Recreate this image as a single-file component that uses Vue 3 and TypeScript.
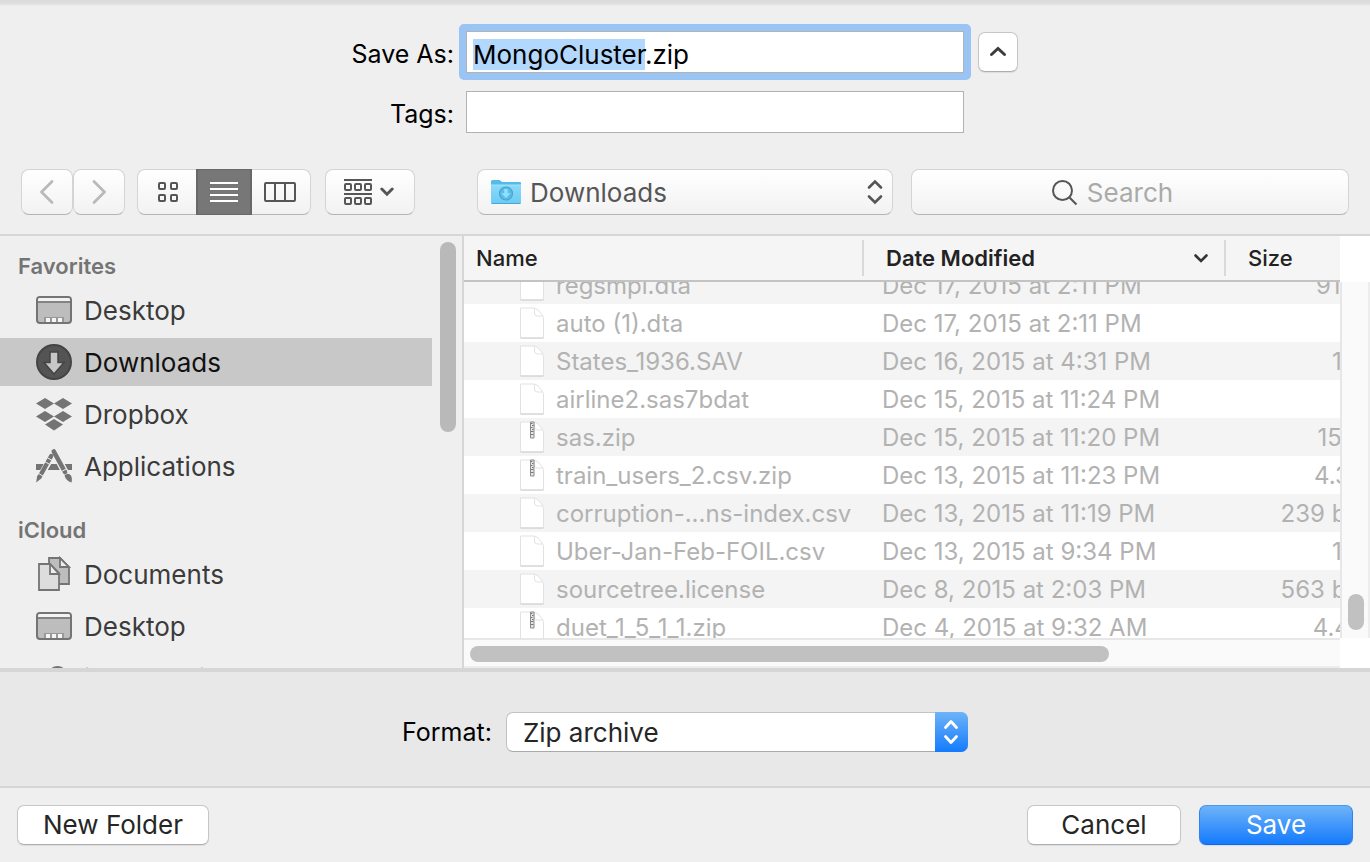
<script setup lang="ts">
import { nextTick, onMounted, ref } from 'vue'

type SidebarIcon = 'desktop' | 'downloads' | 'dropbox' | 'applications' | 'documents' | 'cloud'
type ViewMode = 'icons' | 'list' | 'columns'

interface Place {
  label: string
  icon: SidebarIcon
}

interface PlaceGroup {
  title: string
  places: Place[]
}

interface FileRow {
  name: string
  modified: string
  size: string
}

const groups: PlaceGroup[] = [
  {
    title: 'Favorites',
    places: [
      { label: 'Desktop', icon: 'desktop' },
      { label: 'Downloads', icon: 'downloads' },
      { label: 'Dropbox', icon: 'dropbox' },
      { label: 'Applications', icon: 'applications' },
    ],
  },
  {
    title: 'iCloud',
    places: [
      { label: 'Documents', icon: 'documents' },
      { label: 'Desktop', icon: 'desktop' },
      { label: 'iCloud Drive', icon: 'cloud' },
    ],
  },
]

const files: FileRow[] = [
  { name: 'regsmpl.dta', modified: 'Dec 17, 2015 at 2:11 PM', size: '916 KB' },
  { name: 'auto (1).dta', modified: 'Dec 17, 2015 at 2:11 PM', size: '1 KB' },
  { name: 'States_1936.SAV', modified: 'Dec 16, 2015 at 4:31 PM', size: '17 KB' },
  { name: 'airline2.sas7bdat', modified: 'Dec 15, 2015 at 11:24 PM', size: '1 KB' },
  { name: 'sas.zip', modified: 'Dec 15, 2015 at 11:20 PM', size: '157 KB' },
  { name: 'train_users_2.csv.zip', modified: 'Dec 13, 2015 at 11:23 PM', size: '4.3 MB' },
  { name: 'corruption-...ns-index.csv', modified: 'Dec 13, 2015 at 11:19 PM', size: '239 bytes' },
  { name: 'Uber-Jan-Feb-FOIL.csv', modified: 'Dec 13, 2015 at 9:34 PM', size: '17 KB' },
  { name: 'sourcetree.license', modified: 'Dec 8, 2015 at 2:03 PM', size: '563 bytes' },
  { name: 'duet_1_5_1_1.zip', modified: 'Dec 4, 2015 at 9:32 AM', size: '4.4 MB' },
]

const fileName = ref('MongoCluster.zip')
const tags = ref('')
const query = ref('')
const folder = ref('Downloads')
const format = ref('Zip archive')
const view = ref<ViewMode>('list')
const selected = ref('Downloads')
const nameInput = ref<HTMLInputElement | null>(null)
const fileList = ref<HTMLElement | null>(null)

onMounted(async () => {
  await nextTick()
  if (fileList.value) fileList.value.scrollTop = 16
  const input = nameInput.value
  if (input) {
    input.focus({ preventScroll: true })
    input.setSelectionRange(0, fileName.value.lastIndexOf('.'))
  }
})
</script>

<template>
  <form class="dialog" @submit.prevent>
    <div class="fields">
      <label for="save-as">Save As:</label>
      <input id="save-as" ref="nameInput" v-model="fileName" class="field name-field" type="text" autocomplete="off" spellcheck="false" />
      <button class="push collapse" type="button" aria-label="Collapse">
        <svg width="18" height="12" viewBox="0 0 18 12"><path d="M2.5 8.5 9 2.5l6.5 6" fill="none" stroke="#3c3c3c" stroke-width="3" stroke-linecap="round" /></svg>
      </button>
      <label for="tags">Tags:</label>
      <input id="tags" v-model="tags" class="field" type="text" autocomplete="off" />
    </div>

    <div class="toolbar">
      <div class="history">
        <button class="tool nav" type="button" aria-label="Back">
          <svg width="16" height="26" viewBox="0 0 16 26"><path d="M13 2.500 2.500 13 13 23.500" fill="none" stroke="#b9b9b9" stroke-width="2.800" stroke-linecap="round" stroke-linejoin="round" /></svg>
        </button>
        <button class="tool nav" type="button" aria-label="Forward">
          <svg width="16" height="26" viewBox="0 0 16 26"><path d="M3 2.500 13.500 13 3 23.500" fill="none" stroke="#b9b9b9" stroke-width="2.800" stroke-linecap="round" stroke-linejoin="round" /></svg>
        </button>
      </div>

      <div class="tool views" role="group" aria-label="View">
        <button type="button" aria-label="Icons" :class="{ on: view === 'icons' }" :aria-pressed="view === 'icons'" @click="view = 'icons'">
          <svg width="20" height="20" viewBox="0 0 20 20" fill="none" stroke="currentColor" stroke-width="2">
            <rect x="1" y="1" width="6" height="6" rx="1" /><rect x="13" y="1" width="6" height="6" rx="1" />
            <rect x="1" y="13" width="6" height="6" rx="1" /><rect x="13" y="13" width="6" height="6" rx="1" />
          </svg>
        </button>
        <button type="button" aria-label="List" :class="{ on: view === 'list' }" :aria-pressed="view === 'list'" @click="view = 'list'">
          <svg width="28" height="20" viewBox="0 0 28 20" stroke="currentColor" stroke-width="2"><path d="M0 1h28M0 7h28M0 13h28M0 19h28" /></svg>
        </button>
        <button type="button" aria-label="Columns" :class="{ on: view === 'columns' }" :aria-pressed="view === 'columns'" @click="view = 'columns'">
          <svg width="32" height="20" viewBox="0 0 32 20" fill="none" stroke="currentColor" stroke-width="2">
            <rect x="1" y="1" width="30" height="18" rx="1" /><path d="M11 1v18M21 1v18" />
          </svg>
        </button>
      </div>

      <button class="tool arrange" type="button" aria-label="Arrange by">
        <svg width="28" height="26" viewBox="0 0 28 26" fill="none" stroke="currentColor" stroke-width="2">
          <path d="M0 1h28M0 15h28" />
          <rect x="1" y="5" width="6" height="6" rx="1" /><rect x="11" y="5" width="6" height="6" rx="1" /><rect x="21" y="5" width="6" height="6" rx="1" />
          <rect x="1" y="19" width="6" height="6" rx="1" /><rect x="11" y="19" width="6" height="6" rx="1" /><rect x="21" y="19" width="6" height="6" rx="1" />
        </svg>
        <svg width="14" height="10" viewBox="0 0 14 10"><path d="M1.800 2 7 7.200 12.200 2" fill="none" stroke="currentColor" stroke-width="3" stroke-linecap="round" /></svg>
      </button>

      <div class="location">
        <select v-model="folder" class="tool" aria-label="Folder">
          <option>Downloads</option>
          <option>Desktop</option>
        </select>
        <svg class="folder" width="32" height="28" viewBox="0 0 32 28">
          <defs>
            <linearGradient id="folder-front" x1="0" y1="0" x2="0" y2="1"><stop offset="0" stop-color="#8bdaf9" /><stop offset="1" stop-color="#6ccbf5" /></linearGradient>
          </defs>
          <path d="M1 3.500Q1 2 2.500 2H9q1 0 1.800 1l1.400 1H30q1 0 1 1.200V24.500H1Z" fill="#55bbe6" />
          <path d="M1 7h30v17q0 1.500-1.500 1.500h-27Q1 25.500 1 24Z" fill="url(#folder-front)" />
          <path d="M1 7h30" stroke="#a2e4fb" />
          <path d="M1.500 25.500h29" stroke="#4ba5cb" />
          <circle cx="16" cy="15.500" r="6.500" fill="#5dbbe6" stroke="#42a5d3" stroke-width="1.200" />
          <path d="M14.200 11h3.600v4.200h2.900L16 20l-4.700-4.800h2.900Z" fill="#8fe0ff" />
        </svg>
        <svg class="stepper" width="16" height="26" viewBox="0 0 16 26"><path d="M2 8.500 8 2.500l6 6M2 17.500l6 6 6-6" fill="none" stroke="#555" stroke-width="2.600" stroke-linecap="round" /></svg>
      </div>

      <div class="search">
        <input v-model="query" class="tool" type="text" placeholder="Search" aria-label="Search" />
        <svg width="26" height="26" viewBox="0 0 26 26" fill="none" stroke="#555" stroke-width="2"><circle cx="10.500" cy="10.500" r="9.500" /><path d="m17.200 17.200 7.300 7.300" /></svg>
      </div>
    </div>

    <div class="browser">
      <nav class="sidebar" aria-label="Places">
        <div class="places">
          <section v-for="group in groups" :key="group.title">
            <h2>{{ group.title }}</h2>
            <ul>
              <li v-for="place in group.places" :key="place.label">
                <a href="#" :class="{ current: group.title === 'Favorites' && place.label === selected }" @click.prevent="selected = place.label">
                  <svg v-if="place.icon === 'desktop'" width="36" height="36" viewBox="0 0 36 36">
                    <rect x="1" y="5" width="34" height="26" rx="3" fill="#bdbdbd" stroke="#747474" stroke-width="2" />
                    <path d="M2 9V7.500Q2 6 3.500 6h29Q34 6 34 7.500V9Z" fill="#f2f2f2" />
                    <path d="M2 10h32" stroke="#747474" stroke-width="1.600" />
                    <path d="M8 30v-5h20v5" fill="#989898" />
                    <path d="M10 26h4v4h-4zM16 26h4v4h-4zM22 26h4v4h-4z" fill="#f5f5f5" />
                  </svg>
                  <svg v-else-if="place.icon === 'downloads'" width="36" height="36" viewBox="0 0 36 36">
                    <circle cx="18" cy="18" r="17" fill="#545454" stroke="#444" stroke-width="2" />
                    <path d="M14 8h8v10.500h6L18 30 8 18.500h6Z" fill="#c7c7c7" stroke="#444" stroke-width="1.500" />
                  </svg>
                  <svg v-else-if="place.icon === 'dropbox'" width="36" height="36" viewBox="0 0 36 36" fill="#747474">
                    <path d="m9 2 9 5.500L9 13 0 7.500ZM27 2l9 5.500-9 5.500-9-5.500ZM9 15l9 5.500L9 26l-9-5.500ZM27 15l9 5.500-9 5.500-9-5.500ZM18 23l9 5.500-9 6-9-6Z" />
                  </svg>
                  <svg v-else-if="place.icon === 'applications'" width="36" height="36" viewBox="0 0 36 36">
                    <path d="M0 16h11l-3.500 6H0ZM15 16h6l3.200 6H11.500ZM26 16h10v6h-6.500Z" fill="#747474" />
                    <path d="M18.200 3.500 30 26" stroke="#efefef" stroke-width="7" />
                    <path d="M17.800 3.500 29 24" stroke="#747474" stroke-width="4.600" stroke-linecap="round" />
                    <path d="M15 9.500 4 29" stroke="#efefef" stroke-width="6.500" />
                    <path d="M15.200 8 3.500 29" stroke="#747474" stroke-width="4.400" stroke-linecap="round" />
                    <path d="m11.300 9.700 5 2.800M8.900 13.700l5 2.800M2.500 25.500l5 2.800M25.500 23.500l5.500-3" stroke="#efefef" stroke-width="1" />
                    <path d="m1.200 27.500 4.500 2.500L.2 34.500ZM28.500 27.500q3.500-3.500 6.500 0 1.500 3 .5 7-5.500-1.500-7-7Z" fill="#747474" />
                  </svg>
                  <svg v-else-if="place.icon === 'documents'" width="36" height="36" viewBox="0 0 36 36" stroke="#747474" stroke-width="1.800">
                    <path d="M13 2h11l9 9v17H13Z" fill="#bdbdbd" />
                    <path d="M24 2v9h9Z" fill="#eee" />
                    <path d="M3 8h11l9 9v17H3Z" fill="#ddd" />
                    <path d="M14 8v10h9Z" fill="#eee" />
                  </svg>
                  <svg v-else width="36" height="36" viewBox="0 0 36 36">
                    <path d="M9 30a7 7 0 0 1 0-14h3.500a9 9 0 0 1 18 0 7 7 0 0 1-2 14Z" fill="#ddd" stroke="#747474" stroke-width="2" />
                  </svg>
                  <span>{{ place.label }}</span>
                </a>
              </li>
            </ul>
          </section>
        </div>
        <div class="thumb side-thumb"></div>
      </nav>

      <div class="listing">
        <div ref="fileList" class="files">
          <table>
            <colgroup><col class="c-name" /><col class="c-date" /><col class="c-size" /></colgroup>
            <thead>
              <tr>
                <th scope="col"><span class="head">Name</span></th>
                <th scope="col" class="sorted" aria-sort="descending">
                  <span class="head">Date Modified
                    <svg width="16" height="12" viewBox="0 0 16 12"><path d="m2.500 3.500 5.500 5.500 5.500-5.500" fill="none" stroke="#333" stroke-width="2.600" stroke-linecap="round" /></svg>
                  </span>
                </th>
                <th scope="col"><span class="head">Size</span></th>
              </tr>
            </thead>
            <tbody>
              <tr v-for="file in files" :key="file.name">
                <td>
                  <span class="file">
                    <svg width="24" height="32" viewBox="0 0 24 32">
                      <path d="M1 1h12q3 0 5 2l3.500 4Q23.500 9 23.500 12v19H.5V1Z" fill="#fff" stroke="#e2e2e2" />
                      <path d="M14.500 1.500V6q0 3 3 3h5" fill="none" stroke="#e2e2e2" />
                      <path d="M.5 31h23" stroke="#cecece" />
                      <g v-if="file.name.endsWith('.zip')">
                        <path d="M10.500 1h3.500v16h-3.500z" fill="#e6e6e6" stroke="#8b8b8b" />
                        <path d="M11 2.500h1.500M12 4.500h1.500M11 6.500h1.500M12 8.500h1.500M11 10.500h2.500M11 13.500h2.500" stroke="#777" stroke-width="1" />
                      </g>
                    </svg>
                    <span class="cell">{{ file.name }}</span>
                  </span>
                </td>
                <td><span class="cell">{{ file.modified }}</span></td>
                <td><span class="cell">{{ file.size }}</span></td>
              </tr>
            </tbody>
          </table>
        </div>
        <div class="v-track"><div class="thumb"></div></div>
        <div class="h-track"><div class="thumb"></div></div>
      </div>
    </div>

    <div class="format">
      <label for="format">Format:</label>
      <div class="popup">
        <select id="format" v-model="format">
          <option>Zip archive</option>
          <option>Folder</option>
        </select>
        <span class="arrows">
          <svg width="16" height="26" viewBox="0 0 16 26"><path d="M2.500 8.500 8 2.500l5.500 6M2.500 17.500l5.500 6 5.500-6" fill="none" stroke="#fff" stroke-width="2.800" stroke-linecap="round" stroke-linejoin="round" /></svg>
        </span>
      </div>
    </div>

    <div class="actions">
      <button class="push new-folder" type="button">New Folder</button>
      <button class="push" type="button">Cancel</button>
      <button class="push primary" type="submit">Save</button>
    </div>
  </form>
</template>

<style>
body {
  margin: 0;
  background: #efefef;
}
</style>

<style scoped>
.dialog {
  display: flex;
  flex-direction: column;
  min-height: 100vh;
  box-sizing: border-box;
  overflow: hidden;
  background: linear-gradient(#dadada, #e0e0e0 4px, #efefef 6px) #efefef;
  color: #000;
  font: 400 26px/34px Inter, "Liberation Sans", sans-serif;
}
.dialog *,
.dialog *::before {
  box-sizing: border-box;
}
button,
input,
select {
  margin: 0;
  padding: 0;
  border: 0;
  background: none;
  color: inherit;
  font: inherit;
  outline: none;
}
svg {
  display: block;
  flex: none;
}
label {
  font-size: 25px;
}

.fields {
  display: grid;
  grid-template-columns: 454fr 498px 394fr;
  gap: 18px 12px;
  align-items: center;
  padding: 31px 0 36px;
}
.fields label {
  padding-top: 3px;
  text-align: right;
}
.field {
  height: 42px;
  padding: 5px 6px 1px;
  border: 1px solid #b3b3b3;
  background: #fff;
}
.name-field {
  box-shadow: 0 0 0 7px #99c4f3;
  clip-path: inset(-7px round 5px);
}
.name-field::selection {
  background: #b3d8fd;
  color: #000;
}
.push {
  height: 40px;
  border: 1px solid #c6c6c6;
  border-bottom-color: #aeaeae;
  border-radius: 7px;
  background: #fff;
  box-shadow: 0 1px 1px rgba(0, 0, 0, 0.08);
  color: #262626;
}
.collapse {
  display: grid;
  place-items: center;
  width: 40px;
  margin-left: 2px;
}

.toolbar {
  display: flex;
  align-items: center;
  padding: 0 21px 19px;
  border-bottom: 2px solid #d6d6d6;
  color: #565656;
}
.tool {
  height: 46px;
  border: 1px solid #d4d4d4;
  border-bottom-color: #b4b4b4;
  border-radius: 8px;
  background: linear-gradient(#fff, #f2f2f2);
}
.history {
  display: flex;
  margin-right: 12px;
}
.nav {
  display: grid;
  place-items: center;
  width: 52px;
}
.views {
  display: flex;
  margin-right: 14px;
}
.views button {
  display: grid;
  place-items: center;
  width: 58px;
}
.views button:first-child {
  padding-left: 2px;
}
.views button:last-child {
  padding-right: 2px;
}
.views button.on {
  width: 56px;
  margin: -1px 0;
  border: solid #686868;
  border-width: 1px 2px;
  background: #777;
  color: #fff;
}
.arrange {
  display: flex;
  align-items: center;
  justify-content: center;
  gap: 8px;
  width: 90px;
  margin-right: 62px;
  padding-right: 2px;
}
.location {
  position: relative;
  flex: 416;
  margin-right: 18px;
}
.location select {
  display: block;
  appearance: none;
  width: 100%;
  padding: 2px 0 0 52px;
}
.folder {
  position: absolute;
  left: 13px;
  top: 9px;
  pointer-events: none;
}
.stepper {
  position: absolute;
  right: 10px;
  top: 10px;
  pointer-events: none;
}
.search {
  position: relative;
  flex: 438;
}
.search input {
  display: block;
  width: 100%;
  text-align: center;
}
.search input::placeholder {
  color: #aaa;
  opacity: 1;
}
.search svg {
  position: absolute;
  left: calc(50% - 78px);
  top: 11px;
}

.browser {
  display: flex;
  flex: 1 1 432px;
  height: 432px;
  min-height: 0;
}
.sidebar {
  display: flex;
  width: 464px;
  height: 432px;
  padding-right: 6px;
  border-right: 2px solid #d6d6d6;
  overflow: hidden;
}
.places {
  flex: 1;
  margin-right: 8px;
}
.places section {
  margin-bottom: 10px;
}
.places h2 {
  margin: 0;
  padding: 13px 0 3px 18px;
  color: #747474;
  font-size: 22px;
  font-weight: 600;
}
.places ul {
  display: grid;
  gap: 4px;
  margin: 0;
  padding: 0;
  list-style: none;
}
.places a {
  display: flex;
  align-items: center;
  gap: 12px;
  height: 48px;
  padding-left: 36px;
  color: #3b3b3b;
  text-decoration: none;
}
.places a span {
  padding-top: 2px;
}
.places a.current {
  background: #c8c8c8;
  color: #111;
}
.thumb {
  border-radius: 8px;
  background: #c1c1c1;
}
.side-thumb {
  width: 16px;
  height: 190px;
  margin-top: 6px;
  background: #b9b9b9;
}

.listing {
  display: grid;
  flex: 1;
  grid-template: 402px 30px / minmax(0, 1fr) 30px;
  min-width: 0;
  background: #fff;
}
.files {
  overflow: auto;
  scrollbar-width: none;
}
table {
  width: 942px;
  table-layout: fixed;
  border-collapse: separate;
  border-spacing: 0;
  font-size: 24px;
  font-weight: 425;
  line-height: 30px;
}
.c-name {
  width: 400px;
}
.c-date {
  width: 362px;
}
.c-size {
  width: 180px;
}
th {
  position: sticky;
  top: 0;
  height: 46px;
  padding: 4px 0;
  border-bottom: 2px solid #c3c3c3;
  background: #f5f5f5;
  color: #222;
  font-size: 22px;
  font-weight: 500;
  text-align: left;
}
.head {
  display: flex;
  align-items: center;
  justify-content: space-between;
  height: 36px;
  padding: 0 15px 0 12px;
  border-right: 2px solid #d9d9d9;
}
th + th .head {
  padding-left: 22px;
}
th.sorted {
  font-weight: 600;
}
td {
  height: 38px;
  padding: 0;
  color: #b2b2b2;
  white-space: nowrap;
}
.cell {
  display: block;
  padding-top: 2px;
}
td:nth-child(2) {
  padding-left: 18px;
}
td:nth-child(3) {
  padding-right: 12px;
  text-align: right;
}
tbody tr:nth-child(odd) td {
  background: #f4f4f4;
}
.file {
  display: flex;
  align-items: center;
  gap: 12px;
  padding-left: 56px;
}
.v-track {
  margin-top: 46px;
  padding: 312px 4px 0 6px;
  border-left: 2px solid #e7e7e7;
  border-right: 2px solid #ededed;
  background: #fafafa;
}
.v-track .thumb {
  height: 36px;
}
.h-track {
  padding: 6px;
  border-top: 2px solid #e7e7e7;
  border-bottom: 2px solid #ededed;
  background: #fafafa;
}
.h-track .thumb {
  width: 74%;
  height: 16px;
}

.format {
  display: flex;
  align-items: center;
  justify-content: center;
  gap: 14px;
  height: 120px;
  padding-top: 6px;
  border: solid #d6d6d6;
  border-width: 4px 0 2px;
  background: #e8e8e8;
}
.popup {
  position: relative;
  width: 462px;
}
.popup select {
  display: block;
  appearance: none;
  width: 100%;
  height: 40px;
  padding: 2px 0 0 16px;
  border: 1px solid #c3c3c3;
  border-bottom-color: #a9a9a9;
  border-radius: 7px;
  background: #fff;
  color: #262626;
}
.arrows {
  position: absolute;
  top: 0;
  right: 0;
  display: grid;
  place-items: center;
  width: 33px;
  height: 40px;
  border-radius: 0 7px 7px 0;
  background: linear-gradient(#6eb3f8, #147bfd);
  pointer-events: none;
}

.actions {
  display: flex;
  gap: 18px;
  padding: 17px;
}
.actions .push {
  width: 154px;
}
.actions .new-folder {
  width: 192px;
  margin-right: auto;
}
.actions .primary {
  border-color: #4a98ee #2f82ef #1068ee;
  background: linear-gradient(#6eb3f8, #147bfd);
  color: #fff;
}
</style>
